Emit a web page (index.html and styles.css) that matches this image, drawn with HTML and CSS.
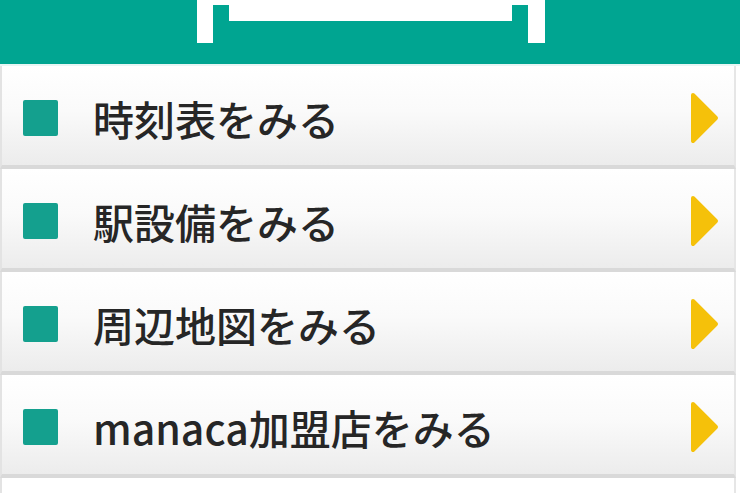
FILE: index.html
```html
<!DOCTYPE html>
<html lang="ja">
<head>
<meta charset="utf-8">
<title>駅メニュー</title>
<link rel="stylesheet" href="styles.css">
</head>
<body>
<header class="header">
  <div class="tab"><div class="tab-inner"></div></div>
</header>
<ul class="menu">
  <li class="item"><span class="mark"></span><span class="label">時刻表をみる</span><svg class="arrow" viewBox="0 0 30 52"><polygon points="3,3 26,26 3,49" /></svg></li>
  <li class="item"><span class="mark"></span><span class="label">駅設備をみる</span><svg class="arrow" viewBox="0 0 30 52"><polygon points="3,3 26,26 3,49" /></svg></li>
  <li class="item"><span class="mark"></span><span class="label">周辺地図をみる</span><svg class="arrow" viewBox="0 0 30 52"><polygon points="3,3 26,26 3,49" /></svg></li>
  <li class="item"><span class="mark"></span><span class="label">manaca加盟店をみる</span><svg class="arrow" viewBox="0 0 30 52"><polygon points="3,3 26,26 3,49" /></svg></li>
  <li class="item item-last"></li>
</ul>
</body>
</html>
```

FILE: styles.css
```css
html, body {
  margin: 0;
  padding: 0;
  background: #ffffff;
  width: 740px;
  height: 493px;
  overflow: hidden;
  font-family: "Noto Sans CJK JP", "Noto Sans", sans-serif;
}

.header {
  height: 64px;
  background: #00a591;
  display: flex;
  align-items: flex-start;
  border-bottom: 2px solid #e8f6f4;
}

.tab {
  margin-left: 197px;
  width: 348px;
  height: 43px;
  box-sizing: border-box;
  border-left: 16px solid #ffffff;
  border-right: 17px solid #ffffff;
  border-top: 5px solid #ffffff;
  padding: 0 16px;
}

.tab-inner {
  height: 16px;
  background: #ffffff;
}

.menu {
  list-style: none;
  margin: 0;
  padding: 0 4px 0 0;
}

.item {
  height: 103px;
  box-sizing: border-box;
  padding-top: 5px;
  display: flex;
  align-items: center;
  background: linear-gradient(#ffffff 0%, #fafafa 45%, #ececec 100%);
  border-bottom: 4px solid #d9d9d9;
  border-left: 2px solid #e3e3e3;
  border-right: 2px solid #e6e6e6;
}

.item-last {
  height: 15px;
  border-bottom: none;
  background: #ffffff;
}

.mark {
  width: 35px;
  height: 36px;
  margin-left: 21px;
  background: #14a08e;
  border-radius: 2px;
  flex: none;
}

.label {
  margin-left: 35px;
  font-size: 41px;
  font-weight: 500;
  color: #262626;
  line-height: 1;
  white-space: nowrap;
}

.arrow {
  margin-left: auto;
  margin-right: 14px;
  width: 30px;
  height: 52px;
  flex: none;
}

.arrow polygon {
  fill: #f5c10a;
  stroke: #f5c10a;
  stroke-width: 4;
  stroke-linejoin: round;
}
```
